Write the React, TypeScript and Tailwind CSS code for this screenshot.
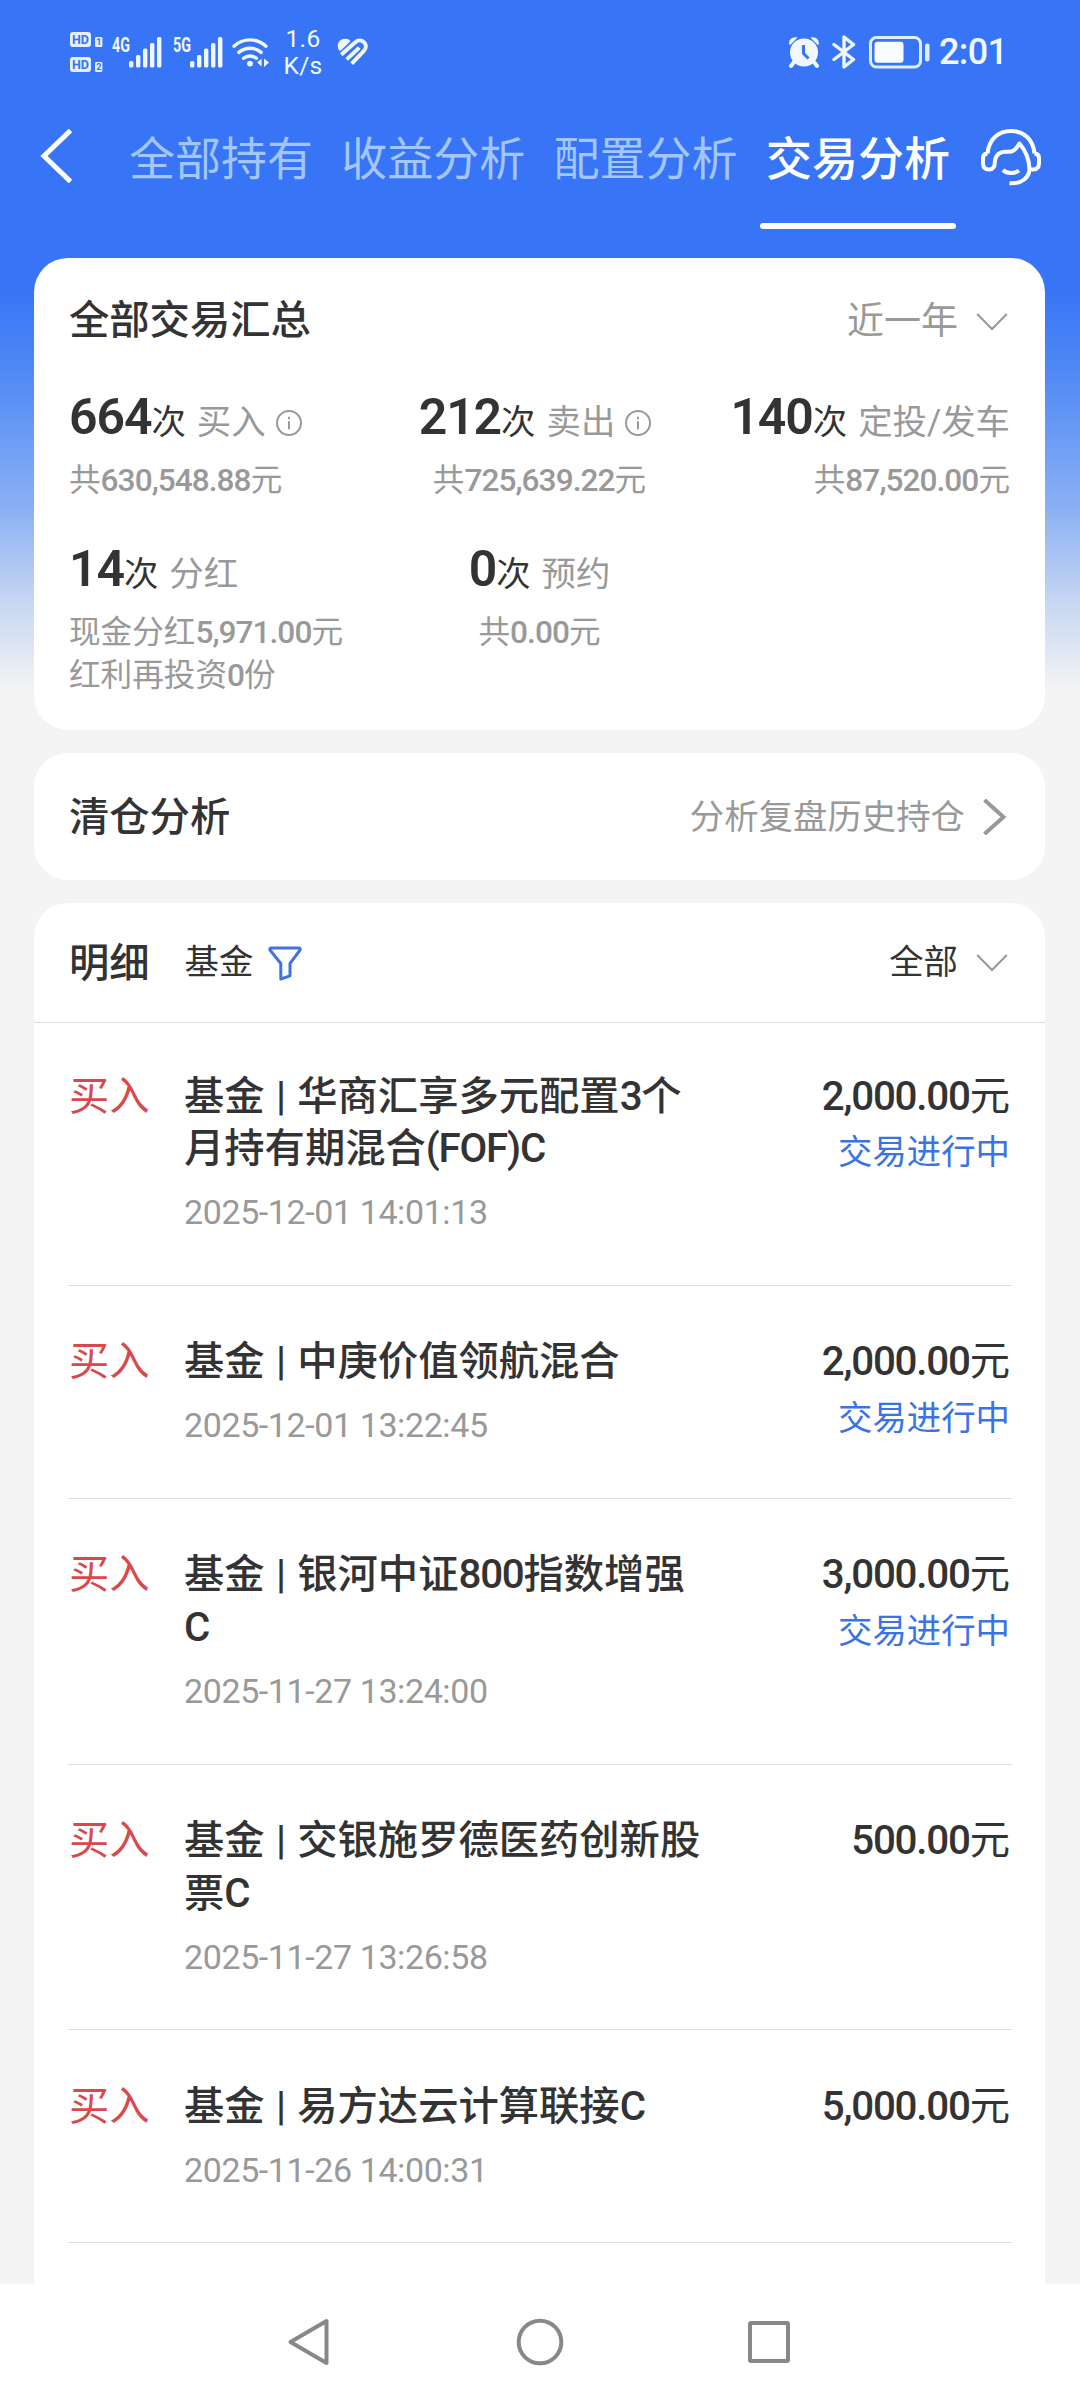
import React from "react";

const tabs = ["全部持有", "收益分析", "配置分析", "交易分析"];

const records = [
    { lines: ["基金 | 华商汇享多元配置3个", "月持有期混合(FOF)C"], time: "2025-12-01 14:01:13", amount: "2,000.00元", pending: true },
    { lines: ["基金 | 中庚价值领航混合"], time: "2025-12-01 13:22:45", amount: "2,000.00元", pending: true },
    { lines: ["基金 | 银河中证800指数增强", "C"], time: "2025-11-27 13:24:00", amount: "3,000.00元", pending: true },
    { lines: ["基金 | 交银施罗德医药创新股", "票C"], time: "2025-11-27 13:26:58", amount: "500.00元", pending: false },
    { lines: ["基金 | 易方达云计算联接C"], time: "2025-11-26 14:00:31", amount: "5,000.00元", pending: false },
];

// 数字和字母部分收紧字距
const Mixed: React.FC<{ text: string }> = ({ text }) => (
    <>
        {text.split(/([\d,.()A-Z]+)/).map((part, i) =>
            i % 2 ? <span key={i} className="tracking-[-0.03em] font-medium">{part}</span> : <span key={i}>{part}</span>
        )}
    </>
);

const InfoIcon = () => (
    <svg className="w-[26px] h-[26px] ml-[10px]" viewBox="0 0 26 26" fill="none" stroke="#999999" strokeWidth="2">
        <circle cx="13" cy="13" r="12" />
        <path d="M13 11.2v8M13 6.8v2.4" />
    </svg>
);

const DownIcon = () => (
    <svg className="w-[32px] h-[18px] ml-[18px] mr-[2px]" viewBox="0 0 32 18" fill="none" stroke="#999999" strokeWidth="2">
        <path d="M1.2 1l14.8 15L30.8 1" />
    </svg>
);

const Signal: React.FC<{ label: string }> = ({ label }) => (
    <svg className="w-[51px] h-[32px] overflow-visible" viewBox="0 0 51 32" fill="#f0f7ff">
        <text x="0" y="15.5" fontSize="19.5" fontWeight="700" textLength="18" lengthAdjust="spacingAndGlyphs">{label}</text>
        <rect x="17" y="25" width="4.4" height="6.5" rx="1.6" />
        <rect x="24" y="19" width="4.4" height="12.5" rx="1.6" />
        <rect x="31" y="12.5" width="4.4" height="19" rx="1.6" />
        <rect x="38" y="7" width="4.4" height="24.5" rx="1.6" />
        <rect x="45" y="1" width="4.4" height="30.5" rx="1.6" />
    </svg>
);

const HdBadge: React.FC<{ sim: string }> = ({ sim }) => (
    <svg className="w-[34px] h-[15px] overflow-visible" viewBox="0 0 34 15">
        <rect x="0" y="0" width="21" height="15" rx="3" fill="#e4efff" />
        <text x="2" y="12.3" fontSize="13.5" fontWeight="700" fill="#3875f6" textLength="17" lengthAdjust="spacingAndGlyphs">HD</text>
        <rect x="25" y="5" width="7.4" height="10" rx="1.2" fill="#e4efff" />
        <text x="26.2" y="13.2" fontSize="9" fontWeight="700" fill="#3875f6">{sim}</text>
    </svg>
);

const StatusBar = () => (
    <div className="flex shrink-0 items-center justify-between h-[104px] pl-[70px] pr-[75px] text-[#f0f7ff]">
        <div className="flex items-center">
            <div className="flex flex-col gap-[10px]">
                <HdBadge sim="1" />
                <HdBadge sim="2" />
            </div>
            <div className="ml-[8px]"><Signal label="4G" /></div>
            <div className="ml-[10px]"><Signal label="5G" /></div>
            {/* wifi */}
            <svg className="w-[38px] h-[32px] ml-[8px]" viewBox="0 0 38 32" fill="none" stroke="#f0f7ff" strokeWidth="3.4" strokeLinecap="round">
                <path d="M2 10.2a23.5 23.5 0 0 1 32 0" />
                <path d="M6.8 16.4a17 17 0 0 1 22.4 0" />
                <path d="M11.6 22.3a10 10 0 0 1 12.8 0" />
                <circle cx="18" cy="27.6" r="2.9" fill="#f0f7ff" stroke="none" />
                <path d="M29.6 22.5v8l-4.4-4zM32 22.5v8.5l5-4.5z" fill="#f0f7ff" stroke="none" />
            </svg>
            <div className="flex flex-col items-center w-[36px] ml-[15px] text-[24.5px] leading-[27px] tracking-[0.3px]">
                <span>1.6</span>
                <span>K/s</span>
            </div>
            {/* 运动健康 */}
            <svg className="w-[32px] h-[28px] ml-[16px]" viewBox="0 0 32 28" fill="none" stroke="#f0f7ff" strokeWidth="3.900">
                <path d="M1.500 11.500C-.8 6 2.500 .8 8 .8c2.400 0 4.200.8 5.600 2.200L4.500 12c-1 1-2.400.8-3-.5z" fill="#f0f7ff" stroke="none" />
                <path d="M4.200 16.700L18.300 4.200c3-2.600 6.800-2 8.900.2 2.200 2.400 2.200 5.800-.3 8.400L14.700 25.600" />
                <path d="M9.700 21.400L22.300 9.600" />
            </svg>
        </div>
        <div className="flex items-center">
            {/* 闹钟 */}
            <svg className="w-[32px] h-[32px]" viewBox="0 0 32 32" fill="#f0f7ff">
                <circle cx="16" cy="16.500" r="14" />
                <path d="M1.200 8.500C.2 4 4.500 0 9.500 1.500L2.500 8.800zM30.800 8.500c1-4.500-3.300-8.500-8.300-7l7 7.300z" />
                <path d="M6 26l-3 4M26 26l3 4" stroke="#f0f7ff" strokeWidth="4" strokeLinecap="round" />
                <path d="M15.500 9v8.500l5 5" fill="none" stroke="#3875f6" strokeWidth="3" />
            </svg>
            {/* 蓝牙 */}
            <svg className="w-[24px] h-[34px] ml-[12px]" viewBox="0 0 24 34" fill="none" stroke="#f0f7ff" strokeWidth="3.4" strokeLinejoin="round" strokeLinecap="round">
                <path d="M2 9.500l19.500 15L12 32V2l9.500 7.500L2 24.500" />
            </svg>
            {/* 电池 */}
            <svg className="w-[61px] h-[33px] ml-[13px]" viewBox="0 0 61 33" fill="none">
                <rect x="1.500" y="1.500" width="50" height="29.500" rx="6" stroke="#e0edff" strokeWidth="3" />
                <rect x="5.500" y="5.800" width="29" height="21" rx="3" fill="#f8fbff" />
                <rect x="56" y="7.500" width="4.500" height="18" rx="2" fill="#e0edff" />
            </svg>
            <span className="w-[66px] ml-[9px] text-[36px] leading-[40px] tracking-[-0.600px] font-medium">2:01</span>
        </div>
    </div>
);

const Header = () => (
    <div className="flex shrink-0 items-start h-[154px] pl-[40px] pt-[22px]">
        <svg className="w-[34px] h-[54px] mt-[3px]" viewBox="0 0 34 54" fill="none" stroke="#ffffff" strokeWidth="5">
            <path d="M30.500 1.500L4 27l26.500 25.500" />
        </svg>
        <div className="flex gap-[28.300px] ml-[55px]">
            {tabs.map((tab, i) => (
                <div key={tab} className="flex flex-col items-center w-[184px]">
                    <span className={i === 3 ? "text-white font-medium text-[46px] leading-[66px] whitespace-nowrap" : "text-[#a2c6fd] text-[46px] leading-[66px] whitespace-nowrap"}>
                        {tab}
                    </span>
                    {i === 3 && <div className="w-[196px] h-[6px] mt-[31px] -mx-[6px] rounded-full bg-white"></div>}
                </div>
            ))}
        </div>
        {/* 客服 */}
        <svg className="w-[62px] h-[58px] mt-[2px] ml-[30px]" viewBox="0 0 62 58" fill="none" stroke="#ffffff" strokeWidth="4" strokeLinejoin="round">
            <path d="M7.500 25.500C9 11 18.500 3 31 3s22 8 23.500 22.500" />
            <path d="M7.500 25.500C4 25.700 3 27.500 3 30v5c0 4 2 6.500 6 6.500 3.500 0 5.500-2 5.700-6C15 27 20 22.800 27 23.800c6 .5 9-2.500 12.500-8.300C46 23 49 30 49.500 41" />
            <path d="M54.500 25.500c3.500.2 4.500 2 4.500 4.500v5c0 4-2 6.500-6 6.500h-3.500c-.5 7.500-7 14.500-20 13.800" />
            <path d="M23 42c4 4 11.500 4 16 .5" />
        </svg>
    </div>
);

type StatProps = { count: string; label: string; lines: string[]; info?: boolean; align: string };

const Stat: React.FC<StatProps> = ({ count, label, lines, info, align }) => (
    <div className={"flex flex-col whitespace-nowrap " + align}>
        <div className={info && align === "items-center" ? "flex items-center h-[60px] mr-[9px]" : "flex items-center h-[60px]"}>
            <div className="flex items-baseline leading-[60px]">
                <span className="text-[50px] font-semibold tracking-[-1.100px]">{count}</span>
                <span className="text-[34.400px]">次</span>
                <span className="ml-[11px] text-[34.400px] text-[#999999]">{label}</span>
            </div>
            {info && <div className="mt-[8px]"><InfoIcon /></div>}
        </div>
        <div className="flex flex-col mt-[9.500px] text-[31.600px] leading-[43px] text-[#999999]">
            {lines.map((line) => (
                <span key={line}><Mixed text={line} /></span>
            ))}
        </div>
    </div>
);

const App: React.FC = () => {
    return (
        <div className="flex flex-col w-[1080px] h-[2400px] overflow-hidden bg-[#f4f4f4] text-[#333333] font-['Roboto','Noto_Sans_CJK_SC',sans-serif]">
            <div className="flex flex-col h-[2284px] overflow-hidden bg-[linear-gradient(180deg,#3875f6_0px,#3875f6_290px,#4f89f5_370px,#8bb1f4_510px,#c6d5f2_600px,#f4f4f4_690px)]">
                <StatusBar />
                <Header />
                <div className="flex flex-col flex-1 gap-[23px] pl-[34px] pr-[35px]">
                    {/* 交易汇总 */}
                    <div className="h-[472px] px-[35px] rounded-[34px] bg-white">
                        <div className="flex items-center justify-between h-[124px] pt-[3px]">
                            <span className="text-[40.300px] font-medium">全部交易汇总</span>
                            <div className="flex items-center text-[37px] text-[#999999]">
                                近一年
                                <DownIcon />
                            </div>
                        </div>
                        <div className="grid grid-cols-3 h-[152px] pt-[7px]">
                            <Stat count="664" label="买入" lines={["共630,548.88元"]} info align="items-start" />
                            <Stat count="212" label="卖出" lines={["共725,639.22元"]} info align="items-center" />
                            <Stat count="140" label="定投/发车" lines={["共87,520.00元"]} align="items-end" />
                        </div>
                        <div className="grid grid-cols-3 pt-[7px]">
                            <Stat count="14" label="分红" lines={["现金分红5,971.00元", "红利再投资0份"]} align="items-start" />
                            <Stat count="0" label="预约" lines={["共0.00元"]} align="items-center" />
                        </div>
                    </div>
                    {/* 清仓分析 */}
                    <div className="flex items-center justify-between h-[127px] px-[35px] pt-[2px] rounded-[34px] bg-white">
                        <span className="pt-[1px] text-[40.300px] font-medium">清仓分析</span>
                        <div className="flex items-center text-[34.400px] text-[#999999]">
                            分析复盘历史持仓
                            <svg className="w-[24px] h-[36px] ml-[18px] mr-[3px]" viewBox="0 0 24 36" fill="none" stroke="#999999" strokeWidth="4">
                                <path d="M1.500 1l19 17-19 17" />
                            </svg>
                        </div>
                    </div>
                    {/* 明细 */}
                    <div className="flex-1 rounded-t-[34px] bg-white">
                        <div className="flex items-center h-[120px] px-[35px] pt-[1px] border-b border-[#dddddd]">
                            <span className="pt-[2px] text-[40.300px] font-medium">明细</span>
                            <span className="ml-[35px] text-[34.400px]">基金</span>
                            <svg className="w-[34px] h-[35px] ml-[15px]" viewBox="0 0 34 35" fill="none" stroke="#3f74dc" strokeWidth="3" strokeLinejoin="round">
                                <path d="M3 2h28c1.300 0 1.600 1.300.8 2.300L22 17.500v12.300L12.800 33V17.500L2.200 4.300C1.400 3.200 1.900 2 3 2z" />
                            </svg>
                            <span className="ml-auto text-[34.400px]">全部</span>
                            <DownIcon />
                        </div>
                        <div className="flex flex-col -mt-[3px] pl-[34px] pr-[33px]">
                            {records.map((item) => (
                                <div key={item.time} className="flex pt-[50.500px] pb-[48.700px] pl-[1px] pr-[2px] border-b border-[#dddddd]">
                                    <span className="w-[115px] text-[40.300px] leading-[52.500px] text-[#d9494c]">买入</span>
                                    <div className="flex flex-col">
                                        {item.lines.map((line) => (
                                            <span key={line} className="text-[40.300px] leading-[52.500px] font-medium whitespace-nowrap [word-spacing:1.300px]">
                                                <Mixed text={line} />
                                            </span>
                                        ))}
                                        <span className="mt-[12.500px] text-[34px] leading-[48px] tracking-[-0.400px] text-[#999999]">{item.time}</span>
                                    </div>
                                    <div className="flex flex-col items-end ml-auto">
                                        <span className="text-[40.300px] leading-[52.500px]"><Mixed text={item.amount} /></span>
                                        {item.pending && <span className="mt-[3px] text-[34.400px] leading-[52px] text-[#3a73e4]">交易进行中</span>}
                                    </div>
                                </div>
                            ))}
                        </div>
                    </div>
                </div>
            </div>
            {/* 底部导航 */}
            <div className="flex items-center h-[116px] pl-[287px] bg-white">
                <svg className="w-[44px] h-[50px]" viewBox="0 0 44 50" fill="none" stroke="#888888" strokeWidth="4" strokeLinejoin="round">
                    <path d="M39.500 4v42L3.500 25z" />
                </svg>
                <svg className="w-[50px] h-[50px] ml-[184px]" viewBox="0 0 50 50" fill="none" stroke="#888888" strokeWidth="4">
                    <circle cx="25" cy="25" r="21.300" />
                </svg>
                <svg className="w-[44px] h-[44px] ml-[182px]" viewBox="0 0 44 44" fill="none" stroke="#888888" strokeWidth="4" strokeLinejoin="round">
                    <rect x="3" y="3" width="38" height="38" rx="1" />
                </svg>
            </div>
        </div>
    );
};

export default App;
